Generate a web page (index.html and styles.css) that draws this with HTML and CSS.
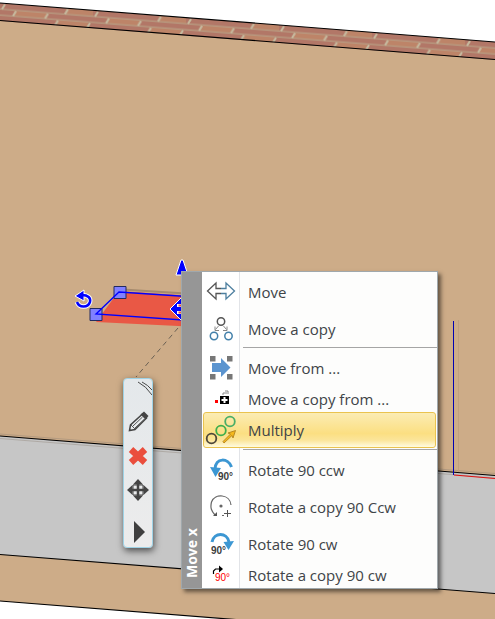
FILE: index.html
```
<!DOCTYPE html>
<html lang="en">
<head>
    <meta charset="UTF-8">
    <meta name="viewport" content="width=device-width, initial-scale=1.0">
    <title>Move x</title>
    <link rel="stylesheet" href="styles.css">
</head>
<body>
    <main class="viewport">
        <!-- 3D view -->
        <svg class="scene" viewBox="0 0 495 619" aria-hidden="true">
            <defs>
                <pattern id="bricks" width="93" height="18" y="3" patternUnits="userSpaceOnUse">
                    <rect width="93" height="18" fill="#b27767"/>
                    <path d="M66 0h31v6h-31zM14 6h33v6h-33zM57 12h31v6h-31z" fill="#bd8468"/>
                    <path d="M0 6.2h93M0 12.2h93" stroke="#b89c82" stroke-width="1.2" fill="none"/>
                    <path d="M2 6l3-5M65 6l3-5M95 6l3-5M13 12l3-5M45 12l3-5M55 18l3-5M87 18l3-5" stroke="#c6ba9f" stroke-width="2" fill="none"/>
                </pattern>
            </defs>
            <rect width="495" height="619" fill="#fff"/>
            <path d="M0 20.5L495 59.5V640L0 601z" fill="#cdac88"/>
            <g transform="skewY(4.5)"><rect y="3" width="495" height="18" fill="url(#bricks)"/></g>
            <path d="M0 436L495 475.5V593.5L0 554.5z" fill="#c6c6c6"/>
            <path d="M0 3L495 42M0 20.5L495 59.5M0 436L495 475.5M0 554.5L495 593.5M0 601L495 640" stroke="#000" stroke-width="1.2" fill="none"/>
            <path d="M0 438.5L495 478M0 434L495 473.5" stroke="#8b7f73" opacity=".4" fill="none"/>
            <path d="M458.500 320V472" stroke="#c0a07d" fill="none"/>
            <path d="M453.500 321V475" stroke="#0000b4" fill="none"/>
            <path d="M454 475L495 478.5" stroke="#e01010" stroke-width="1.2" fill="none"/>
            <!-- selected object -->
            <path d="M119 291L240 299V329L96 322z" fill="#e95845"/>
            <path d="M115 289L240 297" stroke="#a58a6d" stroke-width="2" fill="none"/>
            <path d="M114 286.500h12v12h-12zM90 308.500h12v12h-12z" fill="#8080ff" stroke="#222a60"/>
            <path d="M240 300L119 292L96 314L240 324" stroke="#00f" stroke-width="1.3" fill="none"/>
            <path d="M181 260h2l5 15h-12z" fill="#00f" stroke="#fff"/>
            <path d="M77 302c2 6 11 6 13 0 1-4-2-7-8-7" stroke="#fff" stroke-width="4.500" fill="none"/>
            <path d="M75 296l9-6v11z" fill="#00f" stroke="#fff"/>
            <path d="M77 302c2 6 11 6 13 0 1-4-2-7-8-7" stroke="#00f" stroke-width="2.5" fill="none"/>
            <path d="M170 309l12-12v24z" fill="#00f" stroke="#fff"/>
            <path d="M177 305.500h5M177 312.500h5" stroke="#fff" stroke-width="3"/>
            <path d="M178.500 305.500h3M178.500 312.500h3" stroke="#e95845" stroke-width="2"/>
            <path d="M178 328L136 377" stroke="#6a6053" stroke-dasharray="5 4" fill="none"/>
        </svg>

        <!-- Quick tools -->
        <div class="toolbar" role="toolbar" aria-label="Tools">
            <svg class="grip" viewBox="0 0 28 26" aria-hidden="true">
                <path d="M14 3q8 4 14 13M18 3q6 3 10 8" stroke="#4a4a4a" fill="none"/>
            </svg>
            <button class="tool" aria-label="Edit">
                <svg viewBox="0 0 24 24"><path d="M3.500 20.500l1-5.500L16.500 4l4 4L9 19.500z" fill="#e8ebed" stroke="#444" stroke-width="1.5"/><path d="M14.500 4.500L18 1.500 22.500 6 19.500 9.500z" fill="#444"/><path d="M5 15l4 4M7 16l9.500-9M9 18l9.500-9" stroke="#555" fill="none"/></svg>
            </button>
            <button class="tool" aria-label="Delete">
                <svg viewBox="0 0 24 24"><path d="M5 5.500l14 13M19 5.500l-14 13" stroke="#ea4e3d" stroke-width="6.5"/></svg>
            </button>
            <button class="tool" aria-label="Move">
                <svg viewBox="0 0 24 24"><path d="M12 1l5 5.500H7zM12 23l5-5.500H7zM1 12l5.500-5v10zM23 12l-5.500-5v10z" fill="#444"/><path d="M12 5v14M5 12h14" stroke="#444" stroke-width="2.5"/><path d="M7 7h10v10H7z" stroke="#444" fill="none"/></svg>
            </button>
            <button class="tool tool-next" aria-label="More">
                <svg viewBox="0 0 24 24"><path d="M8 1l11 11L8 23z" fill="#3f3f3f"/></svg>
            </button>
        </div>

        <!-- Context menu -->
        <div class="menu">
            <div class="menu-title">Move x</div>
            <div class="menu-list">
                <button class="item">
                    <svg viewBox="0 0 32 32"><path d="M16 12.500h-5V7L2.500 15l8.500 8v-5.500h5" stroke="#555" stroke-width="1.3" fill="none"/><path d="M16 12.500h5V7l8.500 8-8.500 8v-5.500h-5" stroke="#4d7f9f" stroke-width="1.3" fill="none"/></svg>
                    <span>Move</span>
                </button>
                <button class="item">
                    <svg viewBox="0 0 32 32"><circle cx="16" cy="8.500" r="3.7" stroke="#555" stroke-width="1.5" fill="none"/><g stroke="#4380aa" stroke-width="1.5" fill="none"><circle cx="9" cy="23" r="3.7"/><circle cx="23.500" cy="23" r="3.7"/></g><path d="M13.500 13l-3 3.500m-.5-3v4h4M18.500 13l3 3.500m.5-3v4h-4" stroke="#888" fill="none"/></svg>
                    <span>Move a copy</span>
                </button>
                <hr class="separator">
                <button class="item">
                    <svg viewBox="0 0 32 32"><path d="M5 4h5.500v5.500H5zM22 4h5.500v5.500h-5.500zM5 22h5.500v5.500H5zM22 22h5.500v5.500h-5.500z" fill="#777"/><path d="M7 11h9V6l9.500 9.500-9.500 9.500v-5H7z" fill="#5b94cf"/></svg>
                    <span>Move from ...</span>
                </button>
                <button class="item short">
                    <svg viewBox="0 0 32 32"><path d="M10 17h3v3h-3z" fill="#f00"/><path d="M15 13h9v8h-9z" fill="#000"/><path d="M19.500 14v6M16.500 17h6" stroke="#fff" stroke-width="2"/><path d="M18 12v-2h4M20 8h3v3" stroke="#888" fill="none"/></svg>
                    <span>Move a copy from ...</span>
                </button>
                <button class="item active">
                    <svg viewBox="0 0 32 32"><g stroke-width="1.8" fill="none"><circle cx="6.500" cy="24.500" r="4.800" stroke="#4d473a"/><circle cx="16" cy="16.500" r="4.800" stroke="#3fae4c"/><circle cx="25" cy="7.500" r="4.800" stroke="#4aae67"/></g><path d="M18 27.500l7.500-7.500-2.500-1 7.500-2.500-2.500 7.500-1-2.500-8 7.500z" fill="#f4b81c" stroke="#a97a18" stroke-width=".8"/></svg>
                    <span>Multiply</span>
                </button>
                <hr class="separator">
                <button class="item">
                    <svg viewBox="0 0 32 32"><path d="M10 15C11 3 23 4 26.500 13" stroke="#3c97d3" stroke-width="3" fill="none"/><path d="M5 13l11 1-5.500 9z" fill="#3c97d3"/><text x="13" y="26" class="degrees">90°</text></svg>
                    <span>Rotate 90 ccw</span>
                </button>
                <button class="item">
                    <svg viewBox="0 0 32 32"><path d="M26 14C25 3 10 2 6.500 11c-1.500 6 0 9 3.500 13M19 24.500h-2" stroke="#666" stroke-width="1.2" fill="none"/><path d="M8 25h4v-4z" fill="#555"/><circle cx="16" cy="15" r="1.6" fill="#666"/><path d="M22.500 19v7M19 22.500h7" stroke="#555"/></svg>
                    <span>Rotate a copy 90 Ccw</span>
                </button>
                <button class="item">
                    <svg viewBox="0 0 32 32"><path d="M7 14C9 4 22 4 24 14" stroke="#3c97d3" stroke-width="3" fill="none"/><path d="M18.500 14l10.500-1-5.500 9z" fill="#3c97d3"/><text x="6" y="26" class="degrees">90°</text></svg>
                    <span>Rotate 90 cw</span>
                </button>
                <button class="item short">
                    <svg viewBox="0 0 32 32"><path d="M8.500 15v-3l2-2h6" stroke="#000" stroke-width="1.2" fill="none"/><path d="M14 6.500l4 3.500-4 3.500z" fill="#000"/><text x="10" y="22" class="degrees red">90°</text></svg>
                    <span>Rotate a copy 90 cw</span>
                </button>
            </div>
        </div>
    </main>
</body>
</html>
```

FILE: styles.css
```
body {
    margin: 0;
    font-family: "Open Sans", "Noto Sans", sans-serif;
    background: #fff;
}
.viewport {
    position: relative;
    min-height: 100vh;
    overflow: hidden;
}
.scene {
    display: block;
    width: 100%;
}

/* floating toolbar */
.toolbar {
    position: absolute;
    left: 123px;
    top: 378px;
    box-sizing: border-box;
    width: 30px;
    display: flex;
    flex-direction: column;
    align-items: center;
    border: 1px solid #9fd3e6;
    border-radius: 4px;
    background: linear-gradient(#e4e8eb, #ececec);
    box-shadow: 1px 3px 7px rgba(0, 0, 0, 0.6);
}
.grip {
    width: 28px;
    height: 26px;
}
.tool {
    width: 24px;
    height: 34px;
    padding: 0;
    border: none;
    background: none;
}
.tool svg {
    display: block;
    width: 24px;
    height: 24px;
    margin: auto;
}
.tool-next {
    height: 30px;
    margin-top: 10px;
}

/* context menu */
.menu {
    position: absolute;
    left: 181px;
    top: 271px;
    display: flex;
    border: 1px solid #a0a8ac;
    background: #fdfdfc;
    box-shadow: 3px 3px 4px rgba(0, 0, 0, 0.5);
}
.menu-title {
    box-sizing: border-box;
    width: 20px;
    padding: 10px 0;
    writing-mode: vertical-rl;
    transform: rotate(180deg);
    background: #969696;
    color: #fff;
    font: bold 14px/20px "Noto Sans", sans-serif;
}
.menu-list {
    width: 235px;
    padding: 1px 0;
    background: linear-gradient(to right, #fff 37px, #e2e4e8 37px, #e2e4e8 38px, #fdfdfc 38px);
}
.item {
    box-sizing: border-box;
    display: flex;
    align-items: center;
    gap: 11px;
    width: 100%;
    height: 37px;
    padding: 0 3px;
    border: 0;
    background: none;
    color: #404448;
    font: 15px/20px "Open Sans", "Noto Sans", sans-serif;
    text-align: left;
}
.item svg {
    width: 32px;
    height: 32px;
    flex: none;
}
.item.short {
    height: 25px;
}
.item.active {
    width: 233px;
    height: 36px;
    margin: 1px;
    padding: 0 1px;
    border: 1px solid #eac34f;
    border-radius: 3px;
    background: linear-gradient(#fbecb4, #fbdf82 60%, #fbe59a 80%, #fffbe0);
}
.separator {
    height: 1px;
    margin: 0 0 1px 41px;
    border: 0;
    background: #a5a5a5;
}
.degrees {
    font: bold 10px "Liberation Sans", Arial, sans-serif;
    fill: #3c3c3c;
}
.red {
    font-weight: normal;
    fill: #f00;
}
```
